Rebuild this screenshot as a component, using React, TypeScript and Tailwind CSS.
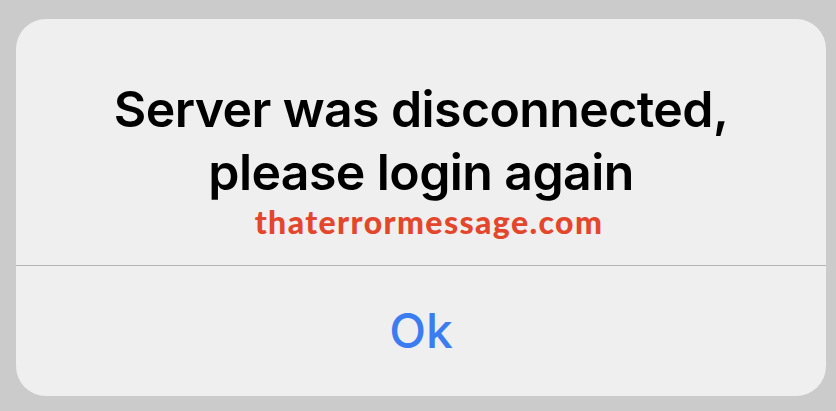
import React from 'react';

export default function App() {
  return (
    <div className="w-[836px] h-[411px] bg-[#cbcbcb] pt-[19px] pl-[16px] pr-[10px] pb-[15px]">
      <div className="h-full flex flex-col rounded-[30px] bg-[#efefef] overflow-hidden">
        <div className="h-[246px] flex flex-col items-center pt-[59px]">
          <h1
            className="text-center text-black font-semibold text-[50px] leading-[63px] tracking-[-0.6px]"
            style={{ fontFamily: 'Inter, "Liberation Sans", sans-serif' }}
          >
            Server was disconnected,
            <br />
            please login again
          </h1>
          <p
            className="ml-[16px] text-[#e4462b] font-black text-[32px] leading-[36px] tracking-[1.4px]"
            style={{ fontFamily: 'Lato, sans-serif' }}
          >
            thaterrormessage.com
          </p>
        </div>
        <div className="h-px bg-[#b4b4b4]" />
        <div className="flex-1 flex items-center justify-center">
          <button
            className="text-[#3b7cf0] font-medium text-[48px] leading-none"
            style={{ fontFamily: 'Inter, "Liberation Sans", sans-serif' }}
          >
            Ok
          </button>
        </div>
      </div>
    </div>
  );
}
